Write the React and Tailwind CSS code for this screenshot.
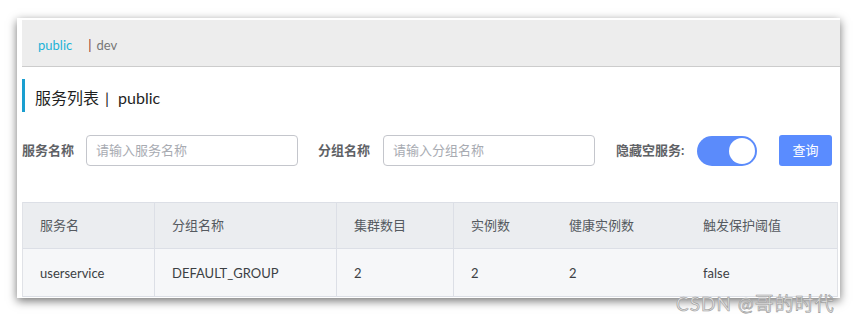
import React, { useState } from 'react';

const FONT = { fontFamily: 'Lato, "Noto Sans CJK SC", sans-serif' };

const columns = [
	{ key: 'name', label: '服务名', width: 'w-[132px]', border: true },
	{ key: 'group', label: '分组名称', width: 'w-[182px]', border: true },
	{ key: 'clusters', label: '集群数目', width: 'w-[117px]', border: true },
	{ key: 'instances', label: '实例数', width: 'w-[98px]', border: false },
	{ key: 'healthy', label: '健康实例数', width: 'w-[134px]', border: false },
	{ key: 'threshold', label: '触发保护阈值', width: 'flex-1', border: false },
];

const rows = [
	{
		name: 'userservice',
		group: 'DEFAULT_GROUP',
		clusters: '2',
		instances: '2',
		healthy: '2',
		threshold: 'false',
	},
];

const App = () => {
	const [hideEmpty, setHideEmpty] = useState(true);

	return (
		<div className="relative w-[858px] h-[323px] bg-white overflow-hidden" style={FONT}>
			<div className="absolute left-[17px] top-[18px] w-[823px] h-[280px] bg-white shadow-[0_3px_9px_rgba(0,0,0,0.55)] pl-[5px] pt-[2px]">
				{/* namespace tabs */}
				<div className="h-[47px] bg-[#ededed] border-b border-[#cccccc] flex items-center pl-[16px] pt-[6px] text-[13px]">
					<span className="text-[#1db3d8]">public</span>
					<span className="ml-[16px] text-[#8a3324]">|</span>
					<span className="ml-[5px] text-[#777777]">dev</span>
				</div>

				{/* title */}
				<div className="mt-[12px] h-[33px] border-l-[3px] border-[#1a9fd0] flex items-end pb-[2px] pl-[10px] text-[16px] text-[#1f1f1f]">
					服务列表<span className="ml-[6px] mr-[9px]">|</span>public
				</div>

				{/* filters */}
				<div className="mt-[23px] h-[31px] flex items-center text-[13px]">
					<span className="font-bold text-[#5f6266] w-[64px]">服务名称</span>
					<div className="w-[212px] h-[31px] border border-[#c4c6cc] rounded-[4px] flex items-center px-[9px] text-[#a8abb2]">
						请输入服务名称
					</div>
					<span className="ml-[20px] font-bold text-[#5f6266] w-[65px]">分组名称</span>
					<div className="w-[212px] h-[31px] border border-[#c4c6cc] rounded-[4px] flex items-center px-[9px] text-[#a8abb2]">
						请输入分组名称
					</div>
					<span className="ml-[21px] font-bold text-[#5f6266] w-[81px]">隐藏空服务:</span>
					<button
						onClick={() => setHideEmpty(!hideEmpty)}
						className={`w-[60px] h-[30px] rounded-full flex items-center p-[2px] ${
							hideEmpty ? 'bg-[#5b8bfb] justify-end' : 'bg-[#dcdfe6] justify-start'
						}`}>
						<span className="w-[26px] h-[26px] rounded-full bg-white block" />
					</button>
					<button className="ml-[22px] w-[53px] h-[31px] rounded-[3px] bg-[#5a8cff] text-white text-[13px]">
						查询
					</button>
				</div>

				{/* table */}
				<div className="mt-[36px] w-[816px] border-l border-r border-[#e0e2e7] text-[13px]">
					<div className="flex h-[47px] bg-[#ebedf0] border-t border-b border-[#dcdfe6] text-[#555a60]">
						{columns.map(col => (
							<div
								key={col.key}
								className={`${col.width} flex items-center pl-[17px] ${
									col.border ? 'border-r border-[#dcdfe6]' : ''
								}`}>
								{col.label}
							</div>
						))}
					</div>
					{rows.map(row => (
						<div
							key={row.name}
							className="flex h-[48px] bg-[#f6f7f9] border-b border-[#dcdfe6] text-[#3c3f44]">
							{columns.map(col => (
								<div
									key={col.key}
									className={`${col.width} flex items-center pl-[17px] pt-[2px] ${
										col.border ? 'border-r border-[#dcdfe6]' : ''
									}`}>
									{row[col.key]}
								</div>
							))}
						</div>
					))}
				</div>
			</div>

			{/* watermark */}
			<div
				className="absolute left-[676px] top-[290px] text-[19px] text-[#e2e2e2] tracking-[1px]"
				style={{ WebkitTextStroke: '0.6px #9a9a9a' }}>
				CSDN @哥的时代
			</div>
		</div>
	);
};

export default App;
